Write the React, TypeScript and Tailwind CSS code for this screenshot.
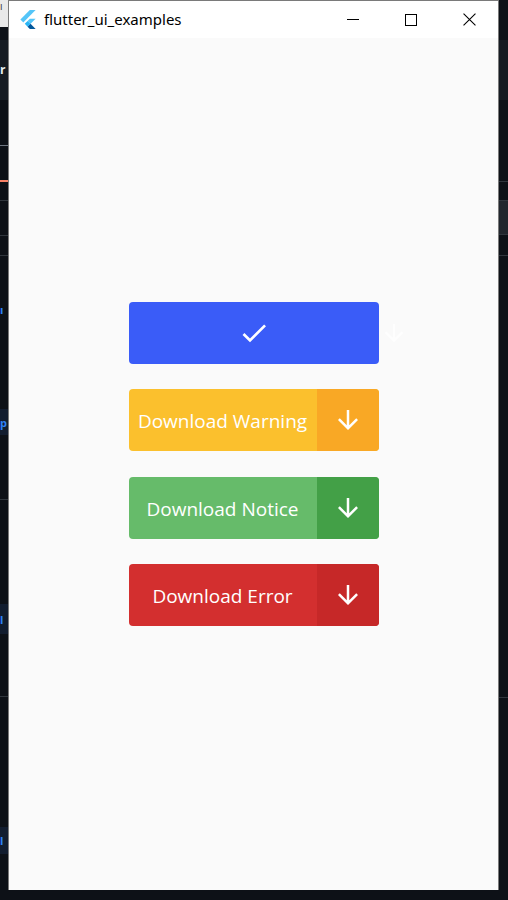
import React from 'react';

const ArrowDown = ({ className = '' }: { className?: string }) => (
  <svg viewBox="0 0 24 24" className={className} fill="currentColor">
    <path d="M20 12l-1.41-1.41L13 16.17V4h-2v12.17l-5.58-5.59L4 12l8 8 8-8z" />
  </svg>
);

const FlutterLogo = () => (
  <svg viewBox="0 0 166 202" className="w-[18px] h-[21px]">
    <polygon fill="#54C5F8" points="37.7,128.9 9.8,101 100.4,10.4 156.2,10.4" />
    <polygon fill="#54C5F8" points="156.2,94 100.4,94 79.5,114.9 107.4,142.8" />
    <polygon fill="#01579B" points="79.5,170.7 100.4,191.6 156.2,191.6 107.4,142.8" />
    <polygon fill="#29B6F6" points="51.6,142.9 79.5,115 107.4,142.9 79.5,170.8" />
    <polygon fill="#0D47A1" fillOpacity="0.6" points="79.5,170.7 107.4,142.8 111.3,146.7 83.4,174.6" />
  </svg>
);

const buttons = [
  { label: 'Download Warning', main: 'bg-[#fbc02d]', side: 'bg-[#f9a825]', extra: '' },
  { label: 'Download Notice', main: 'bg-[#66bb6a]', side: 'bg-[#43a047]', extra: 'mt-[1px]' },
  { label: 'Download Error', main: 'bg-[#d32f2f]', side: 'bg-[#c62828]', extra: '' },
];

// editor showing through on the left of the window
function LeftStrip() {
  return (
    <div className="absolute left-0 top-0 w-[8px] h-full flex flex-col text-[10px] leading-none overflow-hidden">
      <div className="h-[27px] bg-[#e9e9e9] text-[#333] pt-[1px]">ı</div>
      <div className="h-[13px]" />
      <div className="h-[60px] bg-[#161b22] flex items-center text-[#e6edf3] font-bold text-[12px]">r</div>
      <div className="h-[45px]" />
      <div className="h-[1px] bg-[#6e7681]" />
      <div className="h-[34px]" />
      <div className="h-[2px] bg-[#f78166]" />
      <div className="h-[18px]" />
      <div className="h-[1px] bg-[#30363d]" />
      <div className="h-[34px]" />
      <div className="h-[1px] bg-[#30363d]" />
      <div className="h-[19px]" />
      <div className="h-[1px] bg-[#30363d]" />
      <div className="h-[42px]" />
      <div className="h-[23px] flex items-center text-[#2f81f7] text-[11px] font-bold">ı</div>
      <div className="h-[88px]" />
      <div className="h-[26px] bg-[#121d2f] flex items-center text-[#2f81f7] text-[11px] font-bold">p</div>
      <div className="h-[64px]" />
      <div className="h-[1px] bg-[#30363d]" />
      <div className="h-[104px]" />
      <div className="h-[30px] bg-[#121d2f] flex items-center text-[#2f81f7] text-[11px] font-bold">l</div>
      <div className="h-[62px]" />
      <div className="h-[1px] bg-[#30363d]" />
      <div className="h-[130px]" />
      <div className="h-[27px] bg-[#121d2f] flex items-center text-[#2f81f7] text-[11px] font-bold">l</div>
    </div>
  );
}

function RightStrip() {
  return (
    <div className="absolute right-0 top-0 w-[9px] h-full flex flex-col">
      <div className="h-[40px]" />
      <div className="h-[60px] bg-[#161b22]" />
      <div className="h-[81px]" />
      <div className="h-[1px] bg-[#30363d]" />
      <div className="h-[18px]" />
      <div className="h-[35px] bg-[#21262d] border-y border-[#30363d]" />
      <div className="h-[20px]" />
      <div className="h-[1px] bg-[#30363d]" />
      <div className="h-[441px]" />
      <div className="h-[1px] bg-[#30363d]" />
    </div>
  );
}

export default function App() {
  return (
    <div className="relative w-[508px] h-[900px] bg-[#0d1117] overflow-hidden font-['Open_Sans',sans-serif]">
      <LeftStrip />
      <RightStrip />

      {/* app window */}
      <div className="absolute left-[8px] top-0 w-[491px] h-[890px] border-t border-l border-r border-[#7a7a7a] flex flex-col">
        <div className="h-[37px] bg-white flex items-center pl-[10px]">
          <FlutterLogo />
          <span className="ml-[7px] text-[15px] text-black font-['Noto_Sans',sans-serif]">flutter_ui_examples</span>
          <div className="ml-auto flex h-full">
            <div className="w-[58px] flex items-center justify-center">
              <div className="w-[12px] h-[1px] bg-black" />
            </div>
            <div className="w-[58px] flex items-center justify-center">
              <div className="w-[12px] h-[12px] border border-black" />
            </div>
            <div className="w-[58px] flex items-center justify-center">
              <svg viewBox="0 0 12 12" className="w-[13px] h-[13px]" stroke="black" strokeWidth="1">
                <path d="M0.5 0.5l11 11M11.5 0.5l-11 11" />
              </svg>
            </div>
          </div>
        </div>

        <div className="flex-1 bg-[#fafafa] flex flex-col items-center justify-center gap-[25px]">
          <div className="relative w-[250px] h-[62px] rounded-[4px] bg-[#3a5cf8] flex items-center justify-center">
            <svg viewBox="0 0 24 24" className="w-[32px] h-[32px]" fill="white">
              <path d="M9 16.17L4.83 12l-1.42 1.41L9 19 21 7l-1.41-1.41z" />
            </svg>
            <ArrowDown className="absolute left-[251px] top-[17px] w-[28px] h-[28px] text-white opacity-80" />
          </div>

          {buttons.map((b) => (
            <div key={b.label} className={`w-[250px] h-[62px] rounded-[4px] overflow-hidden flex ${b.main} ${b.extra}`}>
              <div className="flex-1 flex items-center justify-center pt-[3px] text-white text-[19px]">{b.label}</div>
              <div className={`w-[62px] flex items-center justify-center ${b.side}`}>
                <ArrowDown className="w-[30px] h-[30px] text-white" />
              </div>
            </div>
          ))}
        </div>
      </div>
    </div>
  );
}
